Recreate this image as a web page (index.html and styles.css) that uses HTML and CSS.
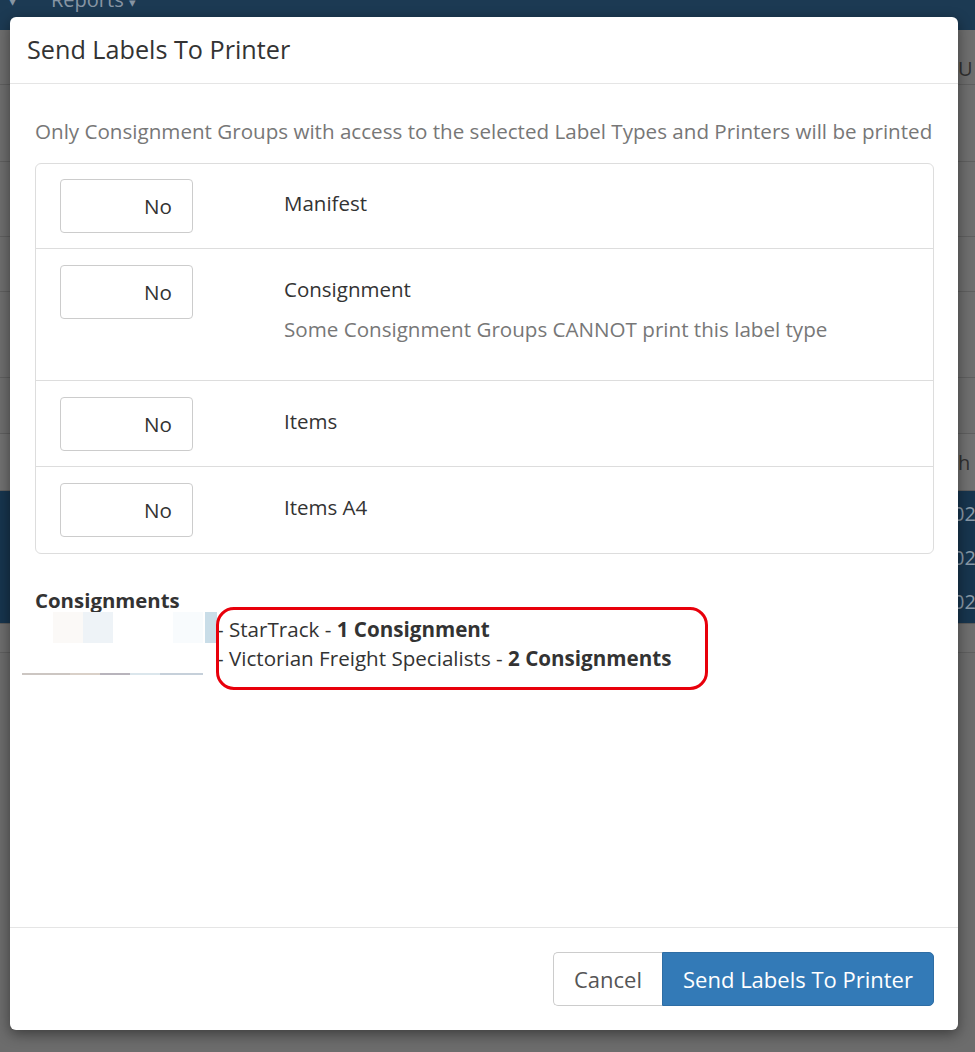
FILE: index.html
```html
<!DOCTYPE html>
<html>
<head>
<meta charset="utf-8">
<link rel="stylesheet" href="styles.css">
</head>
<body>
<div class="app">
  <div class="nav">
    <span class="nav-caret">&#9662;</span>
    <span class="nav-item">Reports <span class="caret">&#9662;</span></span>
  </div>
  <div class="bg-rows">
    <div class="bgr r1"><span class="bgt right top">U</span></div>
    <div class="bgr r2"></div>
    <div class="bgr r3"></div>
    <div class="bgr r4"></div>
    <div class="bgr r5"></div>
    <div class="bgr r6"></div>
    <div class="bgr r7"><span class="bgt right">h</span></div>
    <div class="bgr dark"><span class="bgt right light">020</span></div>
    <div class="bgr dark"><span class="bgt right light">020</span></div>
    <div class="bgr dark"><span class="bgt right light">020</span></div>
    <div class="bgr r8"></div>
  </div>
</div>

<div class="modal">
  <div class="modal-header">
    <h4 class="modal-title">Send Labels To Printer</h4>
  </div>
  <div class="modal-body">
    <p class="hint">Only Consignment Groups with access to the selected Label Types and Printers will be printed</p>
    <div class="list">
      <div class="list-row">
        <div class="toggle">No</div>
        <div class="label-col"><div class="label">Manifest</div></div>
      </div>
      <div class="list-row">
        <div class="toggle">No</div>
        <div class="label-col">
          <div class="label">Consignment</div>
          <div class="sub">Some Consignment Groups CANNOT print this label type</div>
        </div>
      </div>
      <div class="list-row">
        <div class="toggle">No</div>
        <div class="label-col"><div class="label">Items</div></div>
      </div>
      <div class="list-row">
        <div class="toggle">No</div>
        <div class="label-col"><div class="label">Items A4</div></div>
      </div>
    </div>
    <h5 class="cons-title">Consignments</h5>
    <div class="cons">
      <div class="redact">
        <div class="blocks">
          <span class="blk b1"></span><span class="blk b2"></span><span class="blk b3"></span><span class="blk b4"></span><span class="blk b5"></span>
        </div>
        <div class="redact-line"></div>
      </div>
      <div class="cons-lines">
        <div class="cons-line">- StarTrack - <b>1 Consignment</b></div>
        <div class="cons-line">- Victorian Freight Specialists - <b>2 Consignments</b></div>
        <div class="annot"></div>
      </div>
    </div>
  </div>
  <div class="modal-footer">
    <div class="btn-group">
      <button class="btn btn-default">Cancel</button>
      <button class="btn btn-primary">Send Labels To Printer</button>
    </div>
  </div>
</div>
</body>
</html>
```
FILE: styles.css
```css
* { box-sizing: border-box; }
html, body {
  margin: 0;
  padding: 0;
  width: 975px;
  height: 1052px;
  overflow: hidden;
  background: #6c6c6c;
  font-family: "Open Sans", "Noto Sans", sans-serif;
}

.app { width: 975px; height: 1052px; }
.nav {
  height: 30px;
  background: #1c3a53;
  display: flex;
  align-items: flex-end;
  color: #8795a3;
  font-size: 20px;
  line-height: 20px;
  overflow: hidden;
}
.nav-caret { margin-left: 9px; font-size: 14px; margin-bottom: 19px; }
.nav-item { margin-left: 35px; margin-bottom: 18px; }
.nav-item .caret { font-size: 13px; }

.bg-rows { display: flex; flex-direction: column; }
.bgr {
  border-bottom: 1px solid #5f5f5f;
  position: relative;
  background: #6e6e6e;
  overflow: hidden;
}
.r1 { height: 55px; }
.r2 { height: 77px; }
.r3 { height: 75px; }
.r4 { height: 55px; }
.r5 { height: 86px; }
.r6 { height: 56px; }
.r7 { height: 57px; background: #717171; }
.dark { height: 44px; background: #17354e; border-bottom: 1px solid #17354e; }
.r8 { height: 30px; border-top: 1px solid #5a5a5a; }
.bgt {
  position: absolute;
  font-size: 20px;
  color: #303030;
  top: 50%;
  transform: translateY(-50%);
  white-space: nowrap;
}
.bgt.top { top: 38px; }
.bgt.right { left: 958px; }
.bgt.light { color: #8a9aa8; left: 953px; }

.modal {
  position: absolute;
  left: 10px;
  top: 17px;
  width: 948px;
  height: 1013px;
  background: #fff;
  border-radius: 6px;
  box-shadow: 0 4px 14px rgba(0,0,0,0.45);
  display: flex;
  flex-direction: column;
}
.modal-header {
  height: 67px;
  border-bottom: 1px solid #e5e5e5;
  padding: 0 17px;
  display: flex;
  align-items: center;
}
.modal-title {
  margin: 0 0 2px 0;
  font-weight: 400;
  font-size: 25.2px;
  color: #333;
}
.modal-body {
  flex: 1;
  padding: 33px 24px 0 25px;
}
.hint {
  margin: 0 0 18px 0;
  font-size: 20.6px;
  line-height: 28px;
  color: #777;
  white-space: nowrap;
}
.list {
  border: 1px solid #ddd;
  border-radius: 6px;
}
.list-row {
  display: flex;
  align-items: flex-start;
  padding: 16px 24px 15px 24px;
  border-top: 1px solid #ddd;
}
.list-row:first-child { border-top: none; padding-top: 15px; }
.list-row:last-child { padding-bottom: 16px; }
.toggle {
  width: 133px;
  height: 54px;
  border: 1px solid #ccc;
  border-radius: 4px;
  text-align: right;
  padding-right: 20px;
  font-size: 20.6px;
  line-height: 52px;
  color: #333;
}
.label-col { margin-left: 91px; padding-top: 10px; }
.label {
  font-size: 20.5px;
  line-height: 29px;
  color: #333;
}
.sub {
  font-size: 20.6px;
  line-height: 29px;
  color: #777;
  margin-top: 11px;
  margin-bottom: 21px;
}
.cons-title {
  margin: 32px 0 0 0;
  font-size: 20.4px;
  line-height: 28px;
  font-weight: 700;
  color: #333;
}
.cons {
  display: flex;
  align-items: flex-start;
}
.redact {
  margin-left: -13px;
  width: 195px;
  flex: none;
}
.blocks { display: flex; height: 31px; margin-top: -2px; }
.blk { display: block; height: 31px; }
.b1 { width: 31px; }
.b2 { width: 30px; background: #fbf9f7; }
.b3 { width: 30px; background: #eef3f7; }
.b4 { width: 60px; }
.b5 { width: 30px; background: #f8fbfd; }
.blocks::after {
  content: "";
  display: block;
  width: 12px;
  height: 31px;
  margin-left: 2px;
  background: #c9dde8;
}
.redact-line {
  margin-top: 30px;
  height: 2px;
  width: 181px;
  background: linear-gradient(to right, #ccc6c2 0 48px, #d9d0c8 48px 78px, #b8b4bc 78px 108px, #dbe6ec 108px 138px, #c6d0da 138px 181px);
}
.cons-lines {
  position: relative;
  padding-top: 1px;
}
.cons-line {
  font-size: 20.6px;
  line-height: 29px;
  color: #333;
  white-space: nowrap;
}
.cons-line b { font-weight: 700; }
.annot {
  position: absolute;
  left: -1px;
  top: -7px;
  width: 492px;
  height: 83px;
  border: 3px solid #e8000b;
  border-radius: 18px;
}
.modal-footer {
  height: 103px;
  border-top: 1px solid #e5e5e5;
  display: flex;
  justify-content: flex-end;
  align-items: flex-start;
  padding: 24px 24px 0 0;
}
.btn-group { display: flex; }
.btn {
  font-family: "Open Sans", "Noto Sans", sans-serif;
  font-size: 22px;
  height: 54px;
  margin: 0;
  cursor: pointer;
}
.btn-default {
  width: 109px;
  background: #fff;
  border: 1px solid #ccc;
  border-right: none;
  border-radius: 5px 0 0 5px;
  color: #555;
}
.btn-primary {
  width: 272px;
  background: #337ab7;
  border: 1px solid #2e6da4;
  border-radius: 0 5px 5px 0;
  color: #fff;
}
```
